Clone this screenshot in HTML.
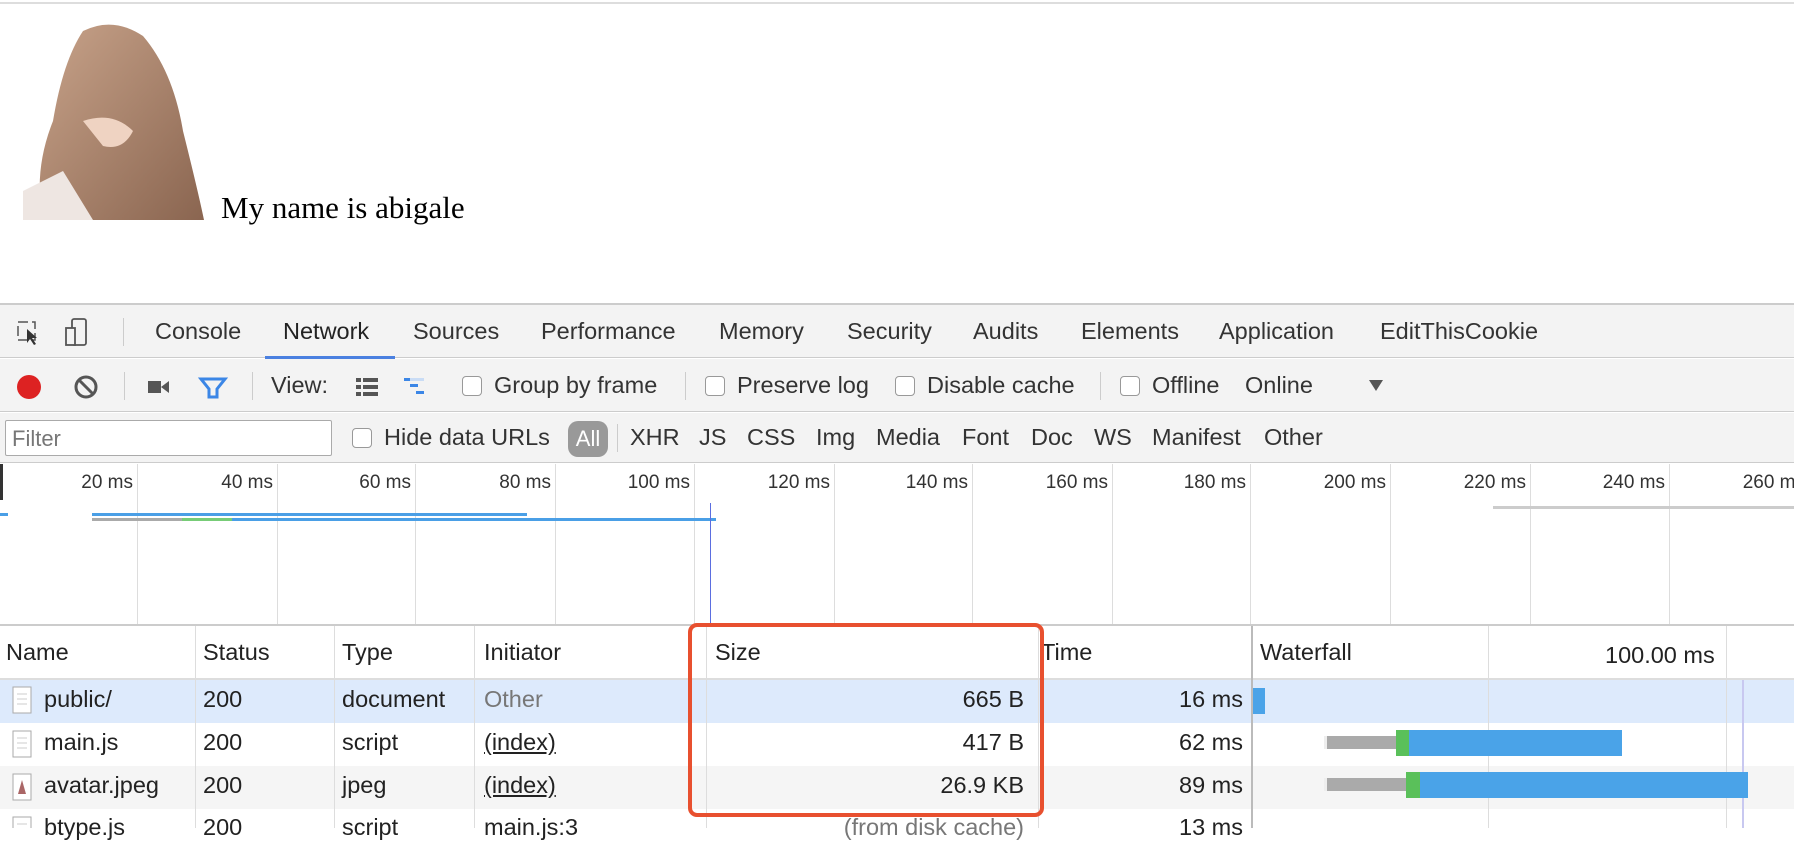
<!DOCTYPE html><html><head><style>
*{margin:0;padding:0;box-sizing:border-box}
body{width:1794px;height:828px;overflow:hidden;background:#fff;font-family:"Liberation Sans",sans-serif;color:#222;position:relative}
.a{position:absolute}
.t{font-size:23.5px;white-space:nowrap}
.r{font-size:23.5px;white-space:nowrap;position:absolute}
.vl{position:absolute;width:1px;background:#ddd}
.cb{display:inline-block;width:20px;height:20px;border:1.5px solid #999;border-radius:4px;vertical-align:-3px;margin-right:12px;background:#fff}
.f span{position:absolute;top:0}
</style></head><body>
<div class="a" style="left:0;top:2px;width:1794px;height:2px;background:#ddd"></div>
<svg class="a" style="left:23px;top:21px" width="181" height="199"><defs><linearGradient id="g" x1="0" y1="0" x2="1" y2="1"><stop offset="0" stop-color="#c8a38a"/><stop offset="1" stop-color="#8a6550"/></linearGradient></defs><rect width="181" height="199" fill="#fff"/><path d="M60 10 Q90 -5 120 15 Q150 50 160 110 Q175 170 181 199 L20 199 Q10 150 30 100 Q40 40 60 10Z" fill="url(#g)"/><path d="M0 170 L40 150 L70 199 L0 199Z" fill="#eee6e2"/><path d="M60 100 Q90 90 110 110 Q100 130 80 125Z" fill="#efd3c2"/></svg>
<div class="a" style="left:221px;top:190px;font-family:'Liberation Serif',serif;font-size:31px;color:#000">My name is abigale</div>
<!-- devtools -->
<div class="a" style="left:0;top:303px;width:1794px;height:2px;background:#ccc"></div>
<div class="a" style="left:0;top:305px;width:1794px;height:53px;background:#f3f3f3;border-bottom:1px solid #ccc"></div>
<svg class="a" style="left:16px;top:318px" width="90" height="30"><rect x="2" y="4" width="17" height="18" fill="none" stroke="#555" stroke-width="1.5" stroke-dasharray="10 4"/><path d="M11 11 L11 25 L14 21 L18 27 L20 26 L16 20 L21 20Z" fill="#333"/><rect x="56" y="1" width="14" height="26" rx="2" fill="none" stroke="#555" stroke-width="1.8"/><rect x="50" y="10" width="9" height="17" fill="#f3f3f3" stroke="#555" stroke-width="1.8"/></svg>
<div class="a" style="left:123px;top:318px;width:1px;height:28px;background:#ccc"></div>
<div class="a t" style="left:155px;top:318px;color:#333">Console</div>
<div class="a t" style="left:283px;top:318px;color:#222">Network</div>
<div class="a" style="left:265px;top:356px;width:130px;height:3px;background:#4a80e0"></div>
<div class="a t" style="left:413px;top:318px;color:#333">Sources</div>
<div class="a t" style="left:541px;top:318px;color:#333">Performance</div>
<div class="a t" style="left:719px;top:318px;color:#333">Memory</div>
<div class="a t" style="left:847px;top:318px;color:#333">Security</div>
<div class="a t" style="left:973px;top:318px;color:#333">Audits</div>
<div class="a t" style="left:1081px;top:318px;color:#333">Elements</div>
<div class="a t" style="left:1219px;top:318px;color:#333">Application</div>
<div class="a t" style="left:1380px;top:318px;color:#333">EditThisCookie</div>
<!-- toolbar -->
<div class="a" style="left:0;top:359px;width:1794px;height:53px;background:#f3f3f3;border-bottom:1px solid #ccc"></div>
<svg class="a" style="left:14px;top:372px" width="230" height="30"><circle cx="15" cy="15" r="12" fill="#d22"/><circle cx="72" cy="15" r="10" fill="none" stroke="#555" stroke-width="3"/><path d="M65 8 L79 22" stroke="#555" stroke-width="3"/><rect x="134" y="9" width="13" height="12" fill="#555"/><path d="M147 15 L155 9 L155 21Z" fill="#555"/><path d="M187 7 L211 7 L203 17 L203 25 L195 25 L195 17Z" fill="none" stroke="#3b86e6" stroke-width="3"/></svg>
<div class="a" style="left:124px;top:372px;width:1px;height:28px;background:#ccc"></div>
<div class="a" style="left:252px;top:372px;width:1px;height:28px;background:#ccc"></div>
<div class="a t" style="left:271px;top:372px;color:#333">View:</div>
<svg class="a" style="left:354px;top:375px" width="70" height="26"><rect x="2" y="3" width="5" height="4" fill="#555"/><rect x="9" y="3" width="15" height="4" fill="#555"/><rect x="2" y="10" width="5" height="4" fill="#555"/><rect x="9" y="10" width="15" height="4" fill="#555"/><rect x="2" y="17" width="5" height="4" fill="#555"/><rect x="9" y="17" width="15" height="4" fill="#555"/><rect x="50" y="3" width="8" height="3" fill="#3b86e6"/><rect x="56" y="9" width="8" height="3" fill="#3b86e6"/><rect x="62" y="16" width="8" height="3" fill="#3b86e6"/><rect x="56" y="3" width="14" height="3" fill="#c9dcf5"/></svg>
<div class="a t" style="left:462px;top:372px;color:#333"><span class="cb"></span>Group by frame</div>
<div class="a" style="left:685px;top:372px;width:1px;height:28px;background:#ccc"></div>
<div class="a t" style="left:705px;top:372px;color:#333"><span class="cb"></span>Preserve log</div>
<div class="a t" style="left:895px;top:372px;color:#333"><span class="cb"></span>Disable cache</div>
<div class="a" style="left:1100px;top:372px;width:1px;height:28px;background:#ccc"></div>
<div class="a t" style="left:1120px;top:372px;color:#333"><span class="cb"></span>Offline</div>
<div class="a t" style="left:1245px;top:372px;color:#333">Online</div>
<div class="a" style="left:1369px;top:380px;border-left:7px solid transparent;border-right:7px solid transparent;border-top:11px solid #555"></div>
<!-- filter row -->
<div class="a" style="left:0;top:413px;width:1794px;height:50px;background:#f3f3f3;border-bottom:1px solid #ccc"></div>
<div class="a" style="left:5px;top:420px;width:327px;height:36px;background:#fff;border:1px solid #aaa;border-radius:2px;font-size:22px;color:#777;padding:5px 6px">Filter</div>
<div class="a t" style="left:352px;top:424px;color:#333"><span class="cb"></span>Hide data URLs</div>
<div class="a" style="left:568px;top:421px;width:40px;height:36px;border-radius:10px;background:#999;color:#fff;font-size:22px;text-align:center;line-height:36px">All</div>
<div class="a" style="left:617px;top:424px;width:1px;height:28px;background:#ccc"></div>
<div class="a t f" style="left:0;top:424px;color:#333"><span style="left:630px">XHR</span><span style="left:699px">JS</span><span style="left:747px">CSS</span><span style="left:816px">Img</span><span style="left:876px">Media</span><span style="left:962px">Font</span><span style="left:1031px">Doc</span><span style="left:1094px">WS</span><span style="left:1152px">Manifest</span><span style="left:1264px">Other</span></div>
<!-- timeline -->
<div class="a" style="left:0;top:464px;width:3px;height:36px;background:#333"></div>
<div class="vl" style="left:137px;top:464px;height:160px"></div>
<div class="vl" style="left:277px;top:464px;height:160px"></div>
<div class="vl" style="left:415px;top:464px;height:160px"></div>
<div class="vl" style="left:555px;top:464px;height:160px"></div>
<div class="vl" style="left:694px;top:464px;height:160px"></div>
<div class="vl" style="left:834px;top:464px;height:160px"></div>
<div class="vl" style="left:972px;top:464px;height:160px"></div>
<div class="vl" style="left:1112px;top:464px;height:160px"></div>
<div class="vl" style="left:1250px;top:464px;height:160px"></div>
<div class="vl" style="left:1390px;top:464px;height:160px"></div>
<div class="vl" style="left:1530px;top:464px;height:160px"></div>
<div class="vl" style="left:1669px;top:464px;height:160px"></div>
<div class="a" style="top:472px;left:0;width:1794px;font-size:19px;color:#333">
<span class="a" style="left:33px;width:100px;text-align:right">20 ms</span>
<span class="a" style="left:173px;width:100px;text-align:right">40 ms</span>
<span class="a" style="left:311px;width:100px;text-align:right">60 ms</span>
<span class="a" style="left:451px;width:100px;text-align:right">80 ms</span>
<span class="a" style="left:590px;width:100px;text-align:right">100 ms</span>
<span class="a" style="left:730px;width:100px;text-align:right">120 ms</span>
<span class="a" style="left:868px;width:100px;text-align:right">140 ms</span>
<span class="a" style="left:1008px;width:100px;text-align:right">160 ms</span>
<span class="a" style="left:1146px;width:100px;text-align:right">180 ms</span>
<span class="a" style="left:1286px;width:100px;text-align:right">200 ms</span>
<span class="a" style="left:1426px;width:100px;text-align:right">220 ms</span>
<span class="a" style="left:1565px;width:100px;text-align:right">240 ms</span>
<span class="a" style="left:1705px;width:100px;text-align:right">260 ms</span>
</div>
<div class="a" style="left:0;top:513px;width:8px;height:3px;background:#4a9fe6"></div>
<div class="a" style="left:92px;top:513px;width:435px;height:3px;background:#4a9fe6"></div>
<div class="a" style="left:92px;top:518px;width:90px;height:3px;background:#aaa"></div>
<div class="a" style="left:182px;top:518px;width:50px;height:3px;background:#7c7"></div>
<div class="a" style="left:232px;top:518px;width:484px;height:3px;background:#4a9fe6"></div>
<div class="a" style="left:1493px;top:506px;width:301px;height:3px;background:#ccc"></div>
<div class="a" style="left:710px;top:503px;width:1px;height:122px;background:#5b6ee0"></div>
<!-- table -->
<div class="a" style="left:0;top:624px;width:1794px;height:2px;background:#ccc"></div>
<div class="a" style="left:0;top:678px;width:1794px;height:2px;background:#ddd"></div>
<div class="a" style="left:0;top:680px;width:1794px;height:43px;background:#ddeafc"></div>
<div class="a" style="left:0;top:766px;width:1794px;height:43px;background:#f5f5f5"></div>
<div class="vl" style="left:195px;top:626px;height:202px"></div>
<div class="vl" style="left:334px;top:626px;height:202px"></div>
<div class="vl" style="left:474px;top:626px;height:202px"></div>
<div class="vl" style="left:706px;top:626px;height:202px"></div>
<div class="vl" style="left:1038px;top:626px;height:202px"></div>
<div class="a" style="left:1251px;top:626px;width:2px;height:202px;background:#bbb"></div>
<div class="vl" style="left:1488px;top:626px;height:202px"></div>
<div class="vl" style="left:1726px;top:626px;height:202px"></div>
<div class="a" style="left:1742px;top:680px;width:2px;height:148px;background:#c8c8f0"></div>
<div class="r" style="left:6px;top:639px">Name</div>
<div class="r" style="left:203px;top:639px">Status</div>
<div class="r" style="left:342px;top:639px">Type</div>
<div class="r" style="left:484px;top:639px">Initiator</div>
<div class="r" style="left:715px;top:639px">Size</div>
<div class="r" style="left:1041px;top:639px">Time</div>
<div class="r" style="left:1260px;top:639px">Waterfall</div>
<div class="r" style="left:1605px;top:642px">100.00 ms</div>
<!-- rows -->
<svg class="a" style="left:12px;top:686px" width="22" height="142"><g fill="#fff" stroke="#aaa"><rect x="1" y="1" width="18" height="26"/><rect x="1" y="45" width="18" height="26"/><rect x="1" y="88" width="18" height="26"/><rect x="1" y="131" width="18" height="26"/></g><path d="M6 108 L10 94 L14 108Z" fill="#a66"/><g stroke="#ccc"><path d="M5 8H15M5 13H15M5 18H15M5 52H15M5 57H15M5 62H15M5 138H15"/></g></svg>
<div class="r" style="left:44px;top:686px">public/</div><div class="r" style="left:203px;top:686px">200</div><div class="r" style="left:342px;top:686px">document</div><div class="r" style="left:484px;top:686px;color:#777">Other</div><div class="r" style="left:720px;top:686px;width:304px;text-align:right">665 B</div><div class="r" style="left:1050px;top:686px;width:193px;text-align:right">16 ms</div>
<div class="r" style="left:44px;top:729px">main.js</div><div class="r" style="left:203px;top:729px">200</div><div class="r" style="left:342px;top:729px">script</div><div class="r" style="left:484px;top:729px;text-decoration:underline">(index)</div><div class="r" style="left:720px;top:729px;width:304px;text-align:right">417 B</div><div class="r" style="left:1050px;top:729px;width:193px;text-align:right">62 ms</div>
<div class="r" style="left:44px;top:772px">avatar.jpeg</div><div class="r" style="left:203px;top:772px">200</div><div class="r" style="left:342px;top:772px">jpeg</div><div class="r" style="left:484px;top:772px;text-decoration:underline">(index)</div><div class="r" style="left:720px;top:772px;width:304px;text-align:right">26.9 KB</div><div class="r" style="left:1050px;top:772px;width:193px;text-align:right">89 ms</div>
<div class="r" style="left:44px;top:814px">btype.js</div><div class="r" style="left:203px;top:814px">200</div><div class="r" style="left:342px;top:814px">script</div><div class="r" style="left:484px;top:814px">main.js:3</div><div class="r" style="left:720px;top:814px;width:304px;text-align:right;color:#777">(from disk cache)</div><div class="r" style="left:1050px;top:814px;width:193px;text-align:right">13 ms</div>
<div class="a" style="left:1253px;top:688px;width:12px;height:26px;background:#4aa3e8"></div>
<div class="a" style="left:1324px;top:736px;width:72px;height:13px;background:#aaa;border-left:3px solid #eee"></div>
<div class="a" style="left:1396px;top:730px;width:13px;height:26px;background:#5ac05a"></div>
<div class="a" style="left:1409px;top:730px;width:213px;height:26px;background:#4aa3e8"></div>
<div class="a" style="left:1324px;top:778px;width:82px;height:13px;background:#aaa;border-left:3px solid #eee"></div>
<div class="a" style="left:1406px;top:772px;width:14px;height:26px;background:#5ac05a"></div>
<div class="a" style="left:1420px;top:772px;width:328px;height:26px;background:#4aa3e8"></div>
<div class="a" style="left:688px;top:623px;width:356px;height:194px;border:4px solid #e8502f;border-radius:9px"></div>
</body></html>
